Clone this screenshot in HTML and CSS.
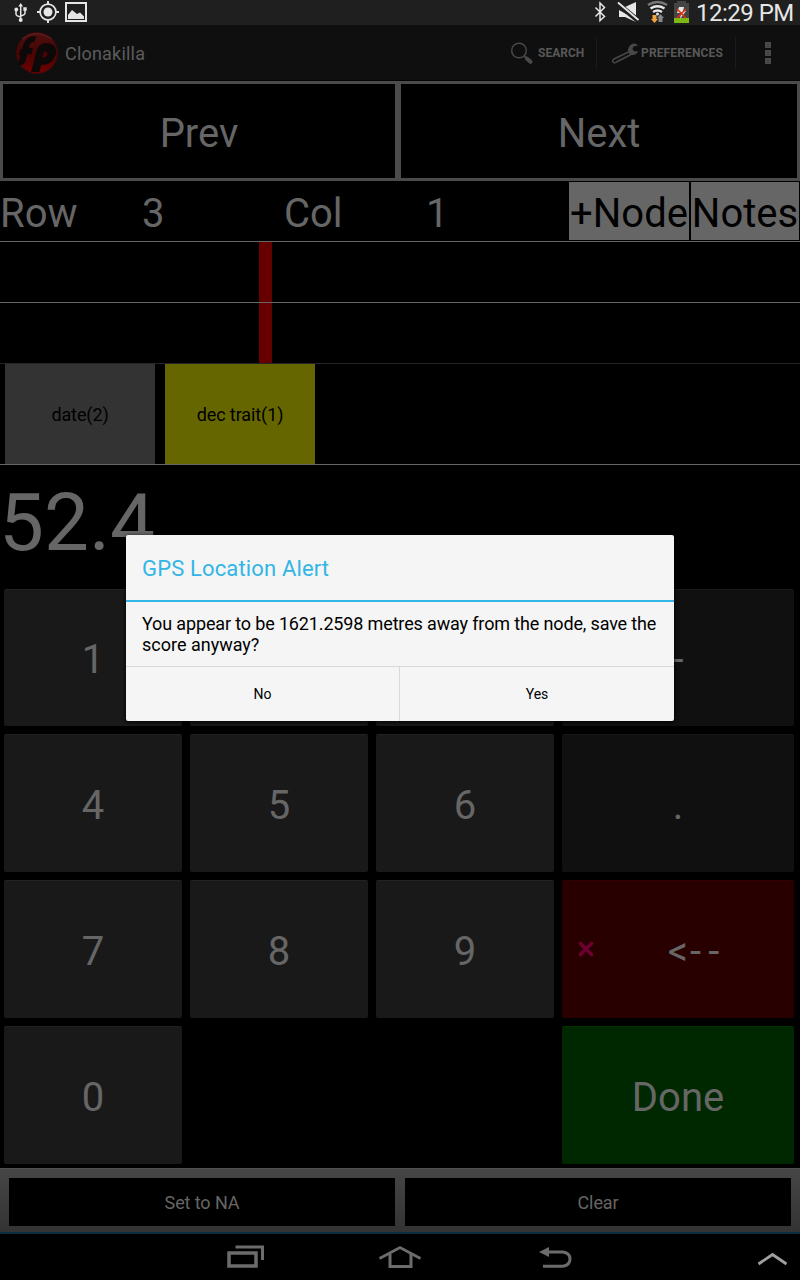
FILE: index.html
```html
<!DOCTYPE html>
<html lang="en">
<head>
<meta charset="utf-8">
<title>Clonakilla</title>
<link rel="stylesheet" href="styles.css">
</head>
<body>
<div class="screen">
  <header class="status">
    <svg class="status-left" width="100" height="25" viewBox="0 0 100 25" fill="none" stroke="#e6e6e6">
      <path d="M20.700 5v15M16 10v4q0 2 4.700 3M25 10v3q0 2-4.300 3" stroke-width="1.500"/>
      <path d="M18.300 6.500L20.700 3l2.400 3.500zM23.300 7.300h3.400v3.400h-3.400z" fill="#e6e6e6" stroke="none"/>
      <circle cx="16.300" cy="9.500" r="1.900" fill="#e6e6e6" stroke="none"/><circle cx="20.700" cy="20" r="2" fill="#e6e6e6" stroke="none"/>
      <circle cx="48" cy="12" r="7.900" stroke-width="1.700"/><circle cx="48" cy="12" r="4.500" fill="#e6e6e6" stroke="none"/>
      <path d="M48 1v4M48 19v4M37 12h4M55 12h4" stroke-width="1.900"/>
      <path d="M66 3h20v18H66z" stroke-width="2"/>
      <path d="M68 19v-4l4-5 5 4 3-1.500 4 4V19z" fill="#e6e6e6" stroke="none"/>
    </svg>
    <svg class="status-right" width="108" height="25" viewBox="588 0 108 25" fill="none" stroke="#e6e6e6">
      <path d="M595.500 7.500l9 9-4.500 4V3l4.500 4.500-9 9" stroke-width="1.500"/>
      <path d="M619 7h6l11-5v14z" fill="#e6e6e6" stroke="none"/>
      <path d="M619 10v7h6l11 5v-2.500z" fill="#e6e6e6" stroke="none"/>
      <path d="M617.500 3.500l21 17.500" stroke="#1f1f1f" stroke-width="5"/>
      <path d="M618 2.500l20.500 17.500" stroke-width="1.900"/>
      <path d="M648 5q9.500-6 19 0" stroke="#777" stroke-width="2.600"/>
      <path d="M650.500 8.500q7-4.500 14 0M653 12q4.500-3 9 0" stroke-width="2.400"/>
      <circle cx="657.500" cy="14" r="1.500" fill="#e6e6e6" stroke="none"/>
      <path d="M652.500 15h4v4h1.500l-3.500 4-3.500-4h1.500z" fill="#f2a33a" stroke="none"/>
      <path d="M658.500 22h4v-4h1.500l-3.500-4-3.500 4h1.500z" fill="#888" stroke="none"/>
      <path d="M674 3h3V1h9v2h3v15h-15z" fill="#444" stroke="none"/>
      <path d="M674 18h15v5h-15z" fill="#7db813" stroke="none"/>
      <path d="M679 7h5l-1 4h3l-6 8 1-6h-4z" fill="#e6e6e6" stroke="none"/>
      <path d="M677 9l9 9M686 9l-9 9" stroke="#dc2f12" stroke-width="1.600"/>
    </svg>
    <span class="clock">12:29 PM</span>
  </header>

  <nav class="actionbar">
    <svg class="logo" width="42" height="44" viewBox="16 31 42 44">
      <defs><linearGradient id="ball" x1="0" y1="0" x2="0" y2="1"><stop offset="0" stop-color="#4c1010"/><stop offset=".5" stop-color="#4a0404"/><stop offset="1" stop-color="#700000"/></linearGradient></defs>
      <circle cx="37" cy="53" r="20.500" fill="url(#ball)" stroke="#3a0a0a"/>
      <path d="M22 39q14-11 30 0" fill="none" stroke="#6a2828" stroke-width=".8"/>
      <path d="M17.500 65l3-10h-1.500l1.500-6h1.500q3-14 14-12.500l-1.500 5.500q-5-1-5.500 6h4l-1.500 6h-4l-2.500 8q-1 3-4 3zM31 72l5.500-21q2-8 11-8 9.500 1 8.500 10-2 11-13 12h-2l-1.500 7zM42.500 57.500q4 .5 5-3.500 0-3-2.500-2.500-2 .5-2.500 6z" fill="#0d0909" fill-rule="evenodd"/>
    </svg>
    <span class="app-title">Clonakilla</span>
    <div class="action search">
      <svg width="24" height="24" viewBox="510 41 24 24" fill="none" stroke="#484848"><circle cx="519" cy="50.500" r="7.300" stroke-width="1.500"/><path d="M524 56l3 2.500" stroke-width="2"/><path d="M526.800 58.500l3.700 3.300" stroke-width="4" stroke-linecap="round"/></svg>
      <span>SEARCH</span>
    </div>
    <div class="action prefs">
      <svg width="28" height="24" viewBox="611 41 28 24" fill="none" stroke="#484848"><path d="M629.500 51.500l-15.500 7.500q-2 1.500-1 3 1.500 1.500 3.500 0L632 54" stroke-width="1.500"/><path d="M638 45.500l-4.500 1-1 3 2 2 3.500-.5q-1.500 4.500-6 4-3.500-1-4-4.500 0-4.500 4-6.500 3.500-1.500 6 1.500z" fill="#484848" stroke="none"/></svg>
      <span>PREFERENCES</span>
    </div>
    <div class="overflow"><i></i><i></i><i></i></div>
  </nav>

  <div class="pager"><button>Prev</button><button>Next</button></div>

  <div class="position">
    <span class="row-label">Row</span><span class="row-val">3</span><span class="col-label">Col</span><span class="col-val">1</span>
    <button class="node">+Node</button><button class="notes">Notes</button>
  </div>

  <div class="track"><i class="marker"></i></div>
  <div class="track last"><i class="marker"></i></div>

  <div class="traits"><div class="trait">date(2)</div><div class="trait active">dec trait(1)</div></div>

  <div class="score">52.4</div>

  <div class="keypad">
    <button>1</button><button>2</button><button>3</button><button class="side">-</button>
    <button>4</button><button>5</button><button>6</button><button class="side">.</button>
    <button>7</button><button>8</button><button>9</button>
    <button class="back">
      <svg class="cross" width="20" height="20" viewBox="0 0 20 20"><path d="M4.500 4.500l11 11M15.500 4.500l-11 11" stroke="#6d0030" stroke-width="3.600" stroke-linecap="round"/></svg>
      <span class="arrow">&lt;<span class="dashes">--</span></span></button>
    <button>0</button><button class="done">Done</button>
  </div>

  <div class="footer"><button>Set to NA</button><button>Clear</button></div>

  <div class="navbar">
    <svg width="800" height="46" viewBox="0 1234 800 46" fill="none" stroke="#6c6c6c">
      <path d="M229 1253h27v13h-27z" stroke-width="3.500"/><path d="M235.500 1247h27v13" stroke-width="3"/>
      <path d="M379.500 1258.500L400 1247.500l20.500 11" stroke-width="2.800"/><path d="M390 1254v12.500h21V1254" stroke-width="3"/>
      <path d="M548 1252h15q7 1 7 7t-7 7.300h-20" stroke-width="3"/><path d="M539 1252l10-5v10z" fill="#6c6c6c" stroke="none"/>
      <path d="M758.500 1264l14-9.500 14 9.500" stroke="#a0a0a0" stroke-width="2.800"/>
    </svg>
  </div>

  <section class="dialog">
    <h1>GPS Location Alert</h1>
    <p><span class="first-line">You appear to be 1621.2598 metres away from the node, save the</span><br>score anyway?</p>
    <div class="choices"><button>No</button><button>Yes</button></div>
  </section>
</div>
</body>
</html>
```
FILE: styles.css
```css
* { box-sizing: border-box; }
body { margin: 0; background: #000; }
button { font: inherit; color: inherit; border: 0; padding: 0; margin: 0; background: none; white-space: nowrap; }
.screen { position: relative; width: 800px; height: 1280px; overflow: hidden; background: #000; color: #666; font-family: Roboto, sans-serif; display: flex; flex-direction: column; }
.screen > * { flex: none; }
svg { display: block; flex: none; }

.status { height: 25px; background: #1f1f1f; display: flex; justify-content: space-between; }
.status-right { margin-left: auto; }
.clock { width: 104px; color: #e6e6e6; font-size: 24px; letter-spacing: -.5px; line-height: 27px; white-space: nowrap; }

.actionbar { height: 56px; background: #0f0f0f; border-bottom: 1px solid #050505; display: flex; align-items: center; padding-left: 16px; }
.app-title { margin-left: 7px; padding-top: 1px; font-size: 18px; letter-spacing: .2px; color: #5c5c5c; }
.action { display: flex; align-items: center; height: 32px; font-size: 12px; font-weight: 700; color: #585858; border-right: 1px solid #1b1b1b; }
.search { width: 87px; margin-left: auto; }
.search span { margin-left: 4px; }
.prefs { width: 139px; padding-left: 14px; }
.prefs span { margin-left: 2px; letter-spacing: .15px; }
.overflow { width: 64px; display: grid; gap: 2px; justify-content: center; }
.overflow i { width: 6px; height: 6px; background: #484848; }

.pager { height: 100px; background: #4b4b4b; display: grid; grid-template-columns: 392px 396px; gap: 6px; padding: 3px; font-size: 40px; }
.pager button { background: #000; padding-top: 4px; }

.position { height: 61px; border-bottom: 1px solid #666; display: flex; font-size: 40px; line-height: 66px; }
.row-label { width: 142px; } .row-val { width: 142px; } .col-label { width: 142px; } .col-val { width: 143px; }
.position button { height: 58px; margin-top: 1px; background: #666; color: #000; line-height: 58px; padding-top: 3px; }
.node { width: 120px; } .notes { width: 108px; margin-left: 2px; }

.track { height: 61px; border-bottom: 1px solid #666; padding-left: 259px; }
.track.last { border-color: #242424; }
.marker { display: block; width: 13px; height: 100%; background: #600; }

.traits { height: 101px; border-bottom: 1px solid #666; display: flex; gap: 10px; padding-left: 5px; }
.trait { width: 150px; background: #333; color: #000; font-size: 18px; letter-spacing: -.1px; line-height: 102px; text-align: center; }
.active { background: #660; }

.score { height: 124px; font-size: 80px; line-height: 117px; text-indent: -1px; }

.keypad { height: 579px; display: grid; grid-template-columns: 178px 178px 178px 232px; grid-template-rows: 137px 138px 138px 138px; gap: 8px; padding-left: 4px; font-size: 40px; }
.keypad button { background: #191919; border: solid #222; border-width: 1px 0 0; border-radius: 2px; padding-top: 3px; position: relative; }
.keypad .side { background: #101010; border-color: #181818; }
.keypad .back { background: #280000; border-color: #300; }
.keypad .done { background: #002800; border-color: #030; grid-column: 4; }
.cross { position: absolute; left: 14px; top: 58px; }
.arrow { padding-left: 38px; letter-spacing: 2px; }
.dashes { letter-spacing: 7px; }

.footer { height: 66px; background: linear-gradient(#464646, #333); border-top: 1px solid #505050; border-bottom: 2px solid #0b2f3f; display: grid; grid-template-columns: 386px 386px; gap: 10px; padding: 9px 9px 6px; font-size: 18px; }
.footer button { background: #000; padding-top: 1px; letter-spacing: -.1px; }
.navbar { height: 46px; }

.dialog { position: absolute; left: 126px; top: 535px; width: 548px; height: 186px; background: #f5f5f5; color: #000; border-radius: 2px; box-shadow: 0 1px 4px #000; }
.dialog h1 { margin: 0; height: 67px; border-bottom: 2px solid #33b5e5; padding-left: 16px; font-size: 22px; font-weight: 400; letter-spacing: .15px; line-height: 67px; color: #33b5e5; }
.dialog p { margin: 0; height: 64px; padding: 11px 16px 0; font-size: 18px; line-height: 21px; white-space: nowrap; }
.first-line { letter-spacing: -.145px; }
.choices { height: 55px; border-top: 1px solid #d9d9d9; display: grid; grid-template-columns: 274px 274px; font-size: 14px; }
.choices button:first-child { border-right: 1px solid #d9d9d9; }
```
